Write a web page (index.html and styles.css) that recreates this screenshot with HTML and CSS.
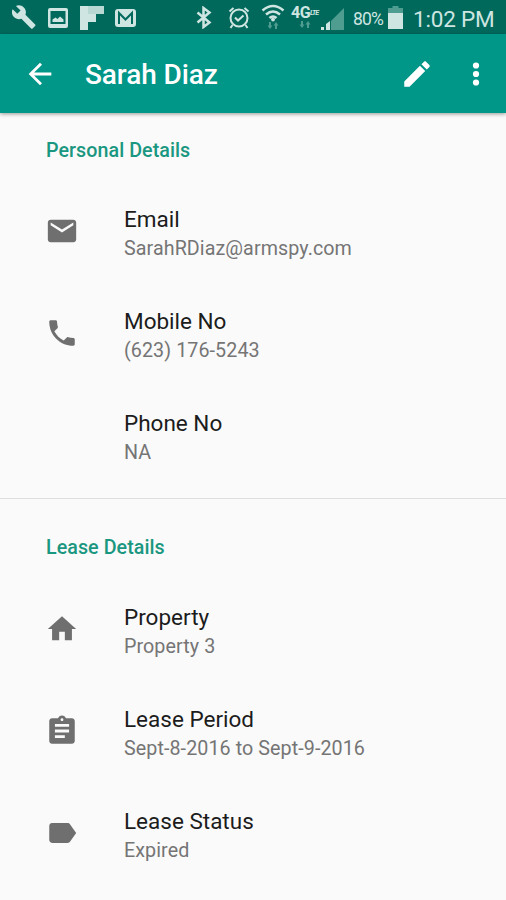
FILE: index.html
```html
<!DOCTYPE html>
<html lang="en">
<head>
  <meta charset="UTF-8" />
  <meta name="viewport" content="width=device-width, initial-scale=1.0"/>
  <title>Sarah Diaz</title>
  <link rel="stylesheet" href="styles.css">
</head>
<body>
  <div class="status-bar">
    <div class="notifications">
      <svg width="24" height="24" viewBox="1 1 22.5 22"><path d="M22.7 19l-9.1-9.1c.9-2.3.4-5-1.5-6.9-2-2-5-2.4-7.4-1.3L9 6 6 9 1.600 4.700C.4 7.100.9 10.100 2.900 12.100c1.900 1.900 4.600 2.400 6.900 1.500l9.100 9.100c.4.4 1 .4 1.400 0l2.300-2.300c.5-.4.5-1.100.1-1.400z"/></svg>
      <svg class="picture" width="20" height="20" viewBox="0 0 20 20"><path fill-rule="evenodd" d="M2 0h16a2 2 0 0 1 2 2v16a2 2 0 0 1-2 2H2a2 2 0 0 1-2-2V2a2 2 0 0 1 2-2zm.5 3v13h15V3z"/><path d="M4.500 14v-2.500l3-2 2 1.500 2.500-2.500 3.500 3V14z"/></svg>
      <svg class="flip" width="24" height="24" viewBox="0 0 24 24"><path d="M0 0h24v8h-8v8H8v8H0z"/><path class="fold" d="M8 0h16v8H8z"/></svg>
      <svg class="gmail" width="21" height="18" viewBox="0 0 21 18"><rect width="21" height="18" rx="3"/><path class="cut" d="M4 15V4l6.500 6.500L17 4v11"/></svg>
    </div>
    <div class="system">
      <svg width="16" height="23" viewBox="0 0 16 23"><path class="line bold" d="M1.500 6.500l12 10-6 4.500V2l6 4.500-12 10"/></svg>
      <svg class="alarm" width="22" height="23" viewBox="0 0 22 23"><circle class="line" cx="11" cy="12" r="8.500"/><path class="line" d="M1.500 5.500l4-3.500M20.500 5.500l-4-3.500M4.500 19l-2 3M17.500 19l2 3M7 11.500l3 3 5.500-5"/></svg>
      <svg class="wifi" width="24" height="26" viewBox="0 0 24 26"><path class="line bold" d="M1.500 6.500q10.500-9 21 0M5 10.500q7-6 14 0M8.500 14q3.500-3 7 0"/><circle cx="12" cy="15.500" r="1.900"/><path class="dim" d="M6.500 21.500L9 25l2.500-3.500H10V18H8v3.500zM12.500 21.500L15 18l2.500 3.500H16V25h-2v-3.500z"/></svg>
      <div class="network">
        <div class="network-type"><b>4G</b><i>LTE</i></div>
        <svg width="14" height="9" viewBox="5 17 14 9"><path class="dim" d="M6.500 21.500L9 25l2.500-3.500H10V18H8v3.500zM12.500 21.500L15 18l2.500 3.500H16V25h-2v-3.500z"/></svg>
      </div>
      <svg class="signal" width="24" height="24" viewBox="0 0 24 24"><path class="dim" d="M10 14L23 1v22H10z"/><path d="M0 20h3v3H0zM5 17l4-3v9H5z"/></svg>
      <span class="percent">80%</span>
      <svg class="battery" width="15" height="23" viewBox="0 0 15 23"><path class="dim" d="M4.500 0h6v2H15v5H0V2h4.500z"/><path d="M0 7h15v16H0z"/></svg>
      <span class="clock">1:02 PM</span>
    </div>
  </div>

  <div class="app-bar">
    <svg class="back" viewBox="0 0 24 24"><path d="M20 11H7.830l5.590-5.590L12 4l-8 8 8 8 1.410-1.410L7.830 13H20v-2z"/></svg>
    <h1>Sarah Diaz</h1>
    <svg class="edit" viewBox="0 0 24 24"><path d="M3 17.250V21h3.750L17.810 9.940l-3.750-3.750L3 17.250zM20.710 7.040c.39-.39.39-1.020 0-1.410l-2.340-2.340c-.39-.39-1.020-.39-1.410 0l-1.830 1.830 3.750 3.750 1.830-1.830z"/></svg>
    <svg class="more" viewBox="0 0 24 24"><circle cx="12" cy="6" r="2.200"/><circle cx="12" cy="12" r="2.200"/><circle cx="12" cy="18" r="2.200"/></svg>
  </div>

  <div class="section">
    <h2>Personal Details</h2>
    <div class="item">
      <svg class="icon" viewBox="0 0 24 24"><path d="M20 4H4c-1.100 0-1.990.9-1.990 2L2 18c0 1.100.9 2 2 2h16c1.100 0 2-.9 2-2V6c0-1.100-.9-2-2-2zm0 4l-8 5-8-5V6l8 5 8-5v2z"/></svg>
      <div class="details">
        <div class="label">Email</div>
        <div class="value">SarahRDiaz@armspy.com</div>
      </div>
    </div>
    <div class="item">
      <svg class="icon" viewBox="0 0 24 24"><path d="M6.620 10.790c1.440 2.830 3.760 5.140 6.590 6.590l2.200-2.200c.27-.27.67-.36 1.020-.24 1.120.37 2.330.57 3.570.57.55 0 1 .45 1 1V20c0 .55-.45 1-1 1-9.390 0-17-7.610-17-17 0-.55.45-1 1-1h3.500c.55 0 1 .45 1 1 0 1.250.2 2.450.57 3.570.11.35.03.74-.25 1.020l-2.200 2.200z"/></svg>
      <div class="details">
        <div class="label">Mobile No</div>
        <div class="value">(623) 176-5243</div>
      </div>
    </div>
    <div class="item">
      <div class="icon"></div>
      <div class="details">
        <div class="label">Phone No</div>
        <div class="value">NA</div>
      </div>
    </div>
  </div>

  <div class="section">
    <h2>Lease Details</h2>
    <div class="item">
      <svg class="icon" viewBox="0 0 24 24"><path d="M10 20v-6h4v6h5v-8h3L12 3 2 12h3v8z"/></svg>
      <div class="details">
        <div class="label">Property</div>
        <div class="value">Property 3</div>
      </div>
    </div>
    <div class="item">
      <svg class="icon" viewBox="0 0 24 24"><path d="M19 3h-4.180C14.400 1.840 13.300 1 12 1c-1.300 0-2.400.84-2.820 2H5c-1.100 0-2 .9-2 2v14c0 1.100.9 2 2 2h14c1.100 0 2-.9 2-2V5c0-1.100-.9-2-2-2zm-7 0c.55 0 1 .45 1 1s-.45 1-1 1-1-.45-1-1 .45-1 1-1zm2 14H7v-2h7v2zm3-4H7v-2h10v2zm0-4H7V7h10v2z"/></svg>
      <div class="details">
        <div class="label">Lease Period</div>
        <div class="value">Sept-8-2016 to Sept-9-2016</div>
      </div>
    </div>
    <div class="item">
      <svg class="icon" viewBox="0 0 24 24"><path d="M17.630 5.840C17.270 5.330 16.670 5 16 5L5 5.010C3.900 5.010 3 5.900 3 7v10c0 1.100.9 1.990 2 1.990L16 19c.67 0 1.270-.33 1.630-.84L22 12l-4.370-6.160z"/></svg>
      <div class="details">
        <div class="label">Lease Status</div>
        <div class="value">Expired</div>
      </div>
    </div>
  </div>
</body>
</html>
```
FILE: styles.css
```css
body {
  margin: 0;
  height: 900px;
  overflow: hidden;
  font-family: Roboto, sans-serif;
  background: #fafafa;
}
svg {
  display: block;
  flex: none;
}
.status-bar {
  display: flex;
  justify-content: space-between;
  height: 34px;
  padding: 0 12px;
  background: #00695c;
  color: #cfe5e1;
  fill: #cfe5e1;
}
.notifications,
.system {
  display: flex;
  align-items: center;
}
.picture {
  margin: 1px 0 0 12px;
}
.flip {
  margin: 2px 0 0 12px;
}
.gmail {
  margin: 2px 0 0 11px;
}
.fold {
  fill: #a9d0ca;
  opacity: 0.6;
}
.cut {
  fill: none;
  stroke: #00695c;
  stroke-width: 2;
}
.line {
  fill: none;
  stroke: #cfe5e1;
  stroke-width: 2;
}
.bold {
  stroke-width: 2.500;
}
.dim {
  fill: #4f9c91;
}
.alarm {
  margin-left: 16px;
}
.wifi {
  margin-left: 11px;
}
.network {
  display: flex;
  flex-direction: column;
  align-items: center;
  width: 27px;
  margin-left: 6px;
}
.network-type {
  display: flex;
  align-items: center;
  height: 14px;
}
.network-type b {
  font-size: 16px;
  line-height: 14px;
  letter-spacing: -0.5px;
}
.network-type i {
  font-size: 7px;
  font-weight: bold;
  line-height: 14px;
  letter-spacing: -1px;
}
.signal {
  margin: 3px 0 0 3px;
}
.percent {
  width: 32px;
  margin: 3px 0 0 8px;
  font-size: 17.500px;
  letter-spacing: -0.8px;
}
.battery {
  margin-left: 3px;
}
.clock {
  width: 81px;
  margin: 3px 0 0 10px;
  font-size: 22.500px;
  letter-spacing: -0.2px;
  white-space: nowrap;
}
.app-bar {
  display: flex;
  align-items: center;
  height: 79px;
  padding: 0 13px 0 23px;
  background: #009688;
  color: #fff;
  fill: #fff;
  box-shadow: 0 1px 4px rgba(0, 0, 0, 0.4);
}
.app-bar svg {
  width: 34px;
  height: 34px;
}
.app-bar h1 {
  flex: 1;
  margin: 2px 0 0 28px;
  font-size: 28px;
  font-weight: 500;
  letter-spacing: -0.1px;
}
.app-bar .more {
  margin-left: 25px;
}
.section {
  padding: 26px 45px 10px;
}
.section + .section {
  padding-top: 37px;
  border-top: 1px solid #dedede;
}
.section h2 {
  margin: 0 0 19px 1px;
  font-size: 19.700px;
  font-weight: 500;
  line-height: 24px;
  letter-spacing: 0.050px;
  color: #1a9780;
}
.section + .section h2 {
  margin-bottom: 20px;
}
.item {
  display: flex;
  align-items: center;
  height: 102px;
}
.icon {
  width: 34px;
  height: 34px;
  margin: 0 45px 4px 0;
  fill: #6f6f6f;
}
.details {
  padding-top: 2px;
}
.label {
  font-size: 22.500px;
  line-height: 29px;
  color: #1c1c1c;
}
.value {
  font-size: 19.700px;
  line-height: 30px;
  letter-spacing: 0.080px;
  color: #757575;
}
```
